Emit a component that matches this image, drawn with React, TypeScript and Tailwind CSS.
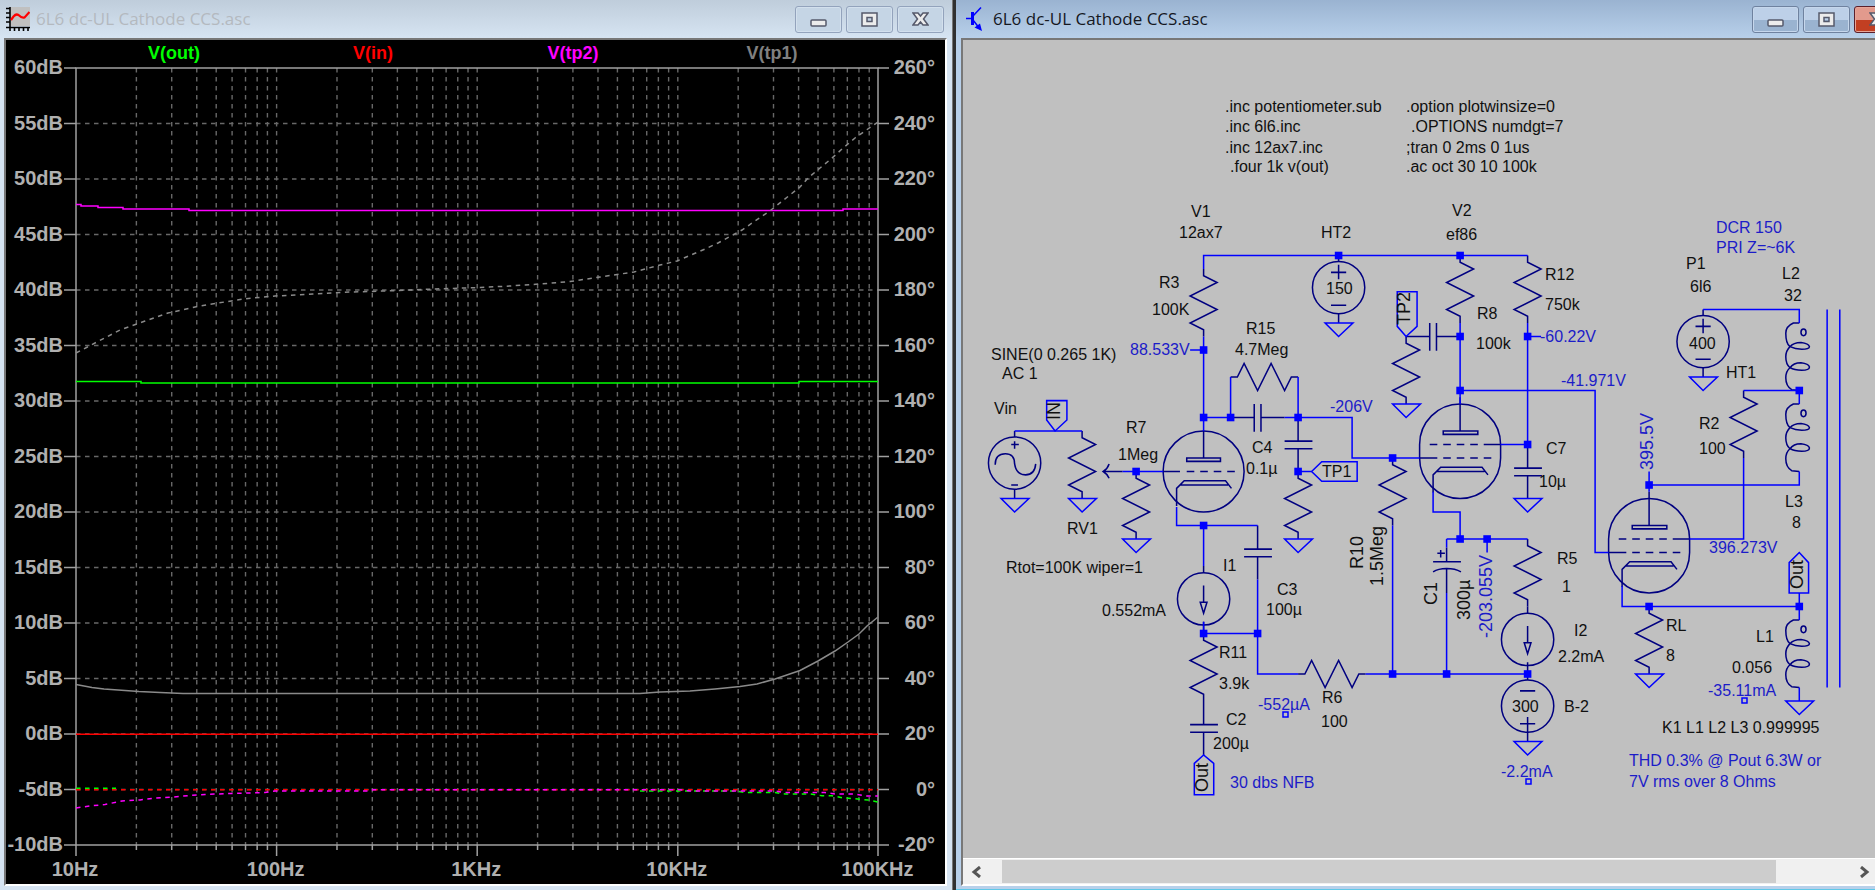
import React from "react";

const DECADE = 200.6;
const PLOT = { left: 76, right: 878, top: 68, bottom: 845 };
const ROW = (PLOT.bottom - PLOT.top) / 14;

const legend = [
  { name: "V(out)", x: 174, color: "#00ff00" },
  { name: "V(in)", x: 373, color: "#ff0000" },
  { name: "V(tp2)", x: 573, color: "#ff00ff" },
  { name: "V(tp1)", x: 772, color: "#808080" },
];

const freqs = ["10Hz", "100Hz", "1KHz", "10KHz", "100KHz"];

function freqLines() {
  const lines: { x: number; major: boolean }[] = [];
  for (let d = 0; d < 4; d++) {
    for (let n = 1; n < 10; n++) {
      lines.push({ x: PLOT.left + DECADE * (d + Math.log10(n)), major: n === 1 });
    }
  }
  return lines;
}

function Plot() {
  const rows = Array.from({ length: 15 }, (_, i) => i);
  const lines = freqLines();

  return (
    <svg viewBox="6 40 939 844" preserveAspectRatio="xMinYMin meet" className="block h-full w-full" fill="none">
      <g stroke="#686868" strokeWidth="1.4" strokeDasharray="4.5 4.5">
        {lines.slice(1).map((l) => (
          <path key={l.x} d={`M${l.x} ${PLOT.top}V${PLOT.bottom}`} />
        ))}
        {rows.slice(1, 14).map((i) => (
          <path key={i} d={`M${PLOT.left} ${PLOT.top + i * ROW}H${PLOT.right}`} />
        ))}
      </g>

      <g stroke="#a0a0a0" strokeWidth="1.5">
        <rect x={PLOT.left} y={PLOT.top} width={PLOT.right - PLOT.left} height={PLOT.bottom - PLOT.top} />
        {rows.map((i) => (
          <path key={i} d={`M64 ${PLOT.top + i * ROW}h12M878 ${PLOT.top + i * ROW}h11`} />
        ))}
        {lines.map((l) => (
          <path key={l.x} d={`M${l.x} ${PLOT.bottom}v${l.major ? 11 : 5}`} />
        ))}
        <path d="M878 845v11" />
      </g>

      {/* magnitude traces */}
      <g strokeWidth="1.5">
        <path stroke="#8a8a8a" d="M76 684.5L92 687.5L104 689L125 690.5L139 691.5L160 692.5L183 693.5H640L660 692L690 691L715 689L740 686.5L757 684L775 679L800 670.5L818 661L835 651L848 642L859 634L867 626L878 617" />
        <path stroke="#ff00ff" d="M76 204.5H81V206H98V207.5H123V209H189V210.5H843V209H878" />
        <path stroke="#00ff00" d="M76 381.5H141V383H799V381.5H878" />
        <path stroke="#ff0000" d="M76 734.3H878" />
      </g>

      {/* phase traces */}
      <g strokeWidth="1.5" strokeDasharray="4.5 4.5">
        <path stroke="#8a8a8a" d="M76 353L95 343L120 330L145 321L168 313L200 306L243 299L275 296L313 294L350 292L385 291L435 289L480 287.5L510 286L540 284L570 281.5L600 277L634 272L660 265L677 261L705 249L718 243L742 230L771 210L800 187L808 178L820 168L831 159L842 149L855 138L865 131L878 122" />
        <path stroke="#00ff00" d="M76 788.3H116M640 791H735L745 792.5H775L785 794H810L822 795.7H832L842 797.7L855 798.7L868 800L878 802" />
        <path stroke="#ff0000" d="M76 789.7H878" />
        <path stroke="#ff00ff" d="M76 808L90 806L105 804.5L122 801L140 800L155 798L173 797L190 795.5L205 794.5L228 793.5L265 792.5L275 791H370L373 789.7H680L690 791H775L785 792.5H825L835 794H855L866 796H878" />
      </g>

      <g className="text-[20px] font-bold" fill="#b0b0b0" fontFamily="Liberation Sans, sans-serif">
        {rows.map((i) => (
          <React.Fragment key={i}>
            <text x="63" y={PLOT.top + i * ROW + 6} textAnchor="end">{60 - i * 5}dB</text>
            <text x="935" y={PLOT.top + i * ROW + 6} textAnchor="end">{260 - i * 20}°</text>
          </React.Fragment>
        ))}
        {freqs.map((f, i) => (
          <text key={f} x={PLOT.left - 1 + i * DECADE} y="876" textAnchor="middle">{f}</text>
        ))}
      </g>
      <g className="text-[18px] font-bold" fontFamily="Liberation Sans, sans-serif">
        {legend.map((l) => (
          <text key={l.name} x={l.x} y="59" fill={l.color} textAnchor="middle">{l.name}</text>
        ))}
      </g>
    </svg>
  );
}

// ---- schematic symbols, drawn on a 16 unit grid ----

interface At {
  x: number;
  y: number;
}

const Resistor = ({ x, y }: At) => (
  <path d={`M${x} ${y}v8l16 8l-32 16l32 16l-32 16l16 8v8`} />
);

const ResistorH = ({ x, y }: At) => (
  <path d={`M${x} ${y}h8l8-16l16 32l16-32l16 32l8-16h8`} />
);

const Cap = ({ x, y }: At) => (
  <path d={`M${x} ${y}v28M${x - 16} ${y + 28}h33M${x - 16} ${y + 37}h33M${x} ${y + 37}v27`} />
);

const CapH = ({ x, y }: At) => (
  <path d={`M${x} ${y}h28M${x + 28} ${y - 16}v33M${x + 36} ${y - 16}v33M${x + 36} ${y}h28`} />
);

const Ground = ({ x, y }: At) => <path d={`M${x - 16} ${y}h33l-17 16z`} />;

const Supply = ({ x, y, flip }: At & { flip?: boolean }) => (
  <>
    <circle cx={x} cy={y + 38} r="31" />
    {flip ? (
      <path d={`M${x} ${y}v7M${x - 9} ${y + 20}h18M${x - 9} ${y + 59}h18M${x} ${y + 51}v29`} />
    ) : (
      <path d={`M${x} ${y}v7M${x} ${y + 11}v17M${x - 9} ${y + 20}h18M${x - 9} ${y + 59}h18M${x} ${y + 69}v11`} />
    )}
  </>
);

const CurrentSource = ({ x, y }: At) => (
  <>
    <circle cx={x} cy={y + 39} r="31" />
    <path d={`M${x} ${y}v8M${x} ${y + 23}v20M${x - 4} ${y + 43}h8l-4 13zM${x} ${y + 66}v14`} />
  </>
);

const Inductor = ({ x, y }: At) => (
  <>
    <path
      transform={`translate(${x} ${y})`}
      d="M0 0H-7Q-16 4 -16 12C-16 20 -15 25 -11 28Q-5 31 3 31Q12 31 12 28Q11 24 2 23Q-7 23 -11 28Q-16 33 -16 40Q-16 49 -11 53Q-6 56 3 56Q12 56 12 52Q11 48 2 47Q-7 47 -11 53Q-16 57 -16 65Q-16 75 -9 79L0 80"
    />
    <ellipse cx={x + 5} cy={y + 11} rx="3" ry="4" />
  </>
);

const Cathode = ({ x, y }: At) => (
  <path d={`M${x - 32} ${y + 30}v-21l9-9h49l7 9M${x - 28} ${y + 5}h57`} />
);

const Triode = ({ x, y }: At) => (
  <>
    <circle cx={x} cy={y + 48} r="48" />
    <path d={`M${x} ${y}v32M${x - 20} ${y + 32}h40v4h-40z`} />
    <path d={`M${x - 48} ${y + 48}h20m8 0h9m7 0h9m7 0h9m7 0h9`} />
    <Cathode x={x} y={y + 59} />
  </>
);

const Pentode = ({ x, y }: At) => (
  <>
    <path d={`M${x - 48} ${y + 48}a48 48 0 0 1 96 0v16a48 48 0 0 1 -96 0z`} />
    <path d={`M${x} ${y - 8}v40M${x - 20} ${y + 32}h41v4h-41z`} />
    <path d={`M${x - 36} ${y + 48}h9m7 0h9m7 0h9m7 0h9m7 0h20`} />
    <path d={`M${x - 48} ${y + 64}h21m7 0h9m7 0h9m7 0h9m7 0h9`} />
    <Cathode x={x} y={y + 75} />
  </>
);

const wires = [
  "M0 16V0H384",
  "M0 96V208M-16 112H0",
  "M0 192H32V144M112 144V192M96 192H176V240H256",
  "M112 256H128M-96 256H-48",
  "M-224 208H-144",
  "M-32 298V320H64M0 320V368M64 384V496H112M0 448H64M0 434V448",
  "M192 496H384M224 320V496M288 400V496",
  "M304 80V176M304 160H464V352H480",
  "M384 80V224H352M384 96H400",
  "M272 280V304H304V336M288 336H384M336 336V352M288 336V346",
  "M592 64H706V80M640 160H706M706 160V176M640 240V336H576",
  "M706 256V272H528M528 256V280",
  "M496 392V416H706M706 400V432M706 512V528",
  "M739 64V512M754 64V512",
];

const nodes = [
  [0, 112], [0, 192], [32, 192], [112, 192], [112, 256], [-80, 256],
  [160, 0], [304, 0], [304, 96], [304, 160], [384, 96], [384, 224],
  [224, 240], [0, 320], [0, 448], [64, 448], [224, 496], [288, 496],
  [384, 496], [304, 336], [336, 336], [528, 272], [706, 160],
  [528, 416], [706, 416],
];

const resistors = [
  [0, 16], [0, 448], [-144, 208], [-80, 256], [112, 256], [224, 240],
  [240, 96], [304, 0], [384, 0], [384, 336], [528, 416], [640, 160],
];

const grounds = [
  [-224, 288], [-144, 288], [-80, 336], [112, 336], [160, 80], [240, 176],
  [384, 288], [384, 576], [528, 496], [592, 144], [706, 528],
];

type Label = [text: string, x: number, y: number];

const labels: Label[] = [
  [".inc potentiometer.sub", 1225, 112],
  [".inc 6l6.inc", 1225, 132],
  [".inc 12ax7.inc", 1225, 153],
  [".four 1k v(out)", 1230, 172],
  [".option plotwinsize=0", 1406, 112],
  [".OPTIONS numdgt=7", 1411, 132],
  [";tran 0 2ms 0 1us", 1406, 153],
  [".ac oct 30 10 100k", 1406, 172],
  ["V1", 1191, 217],
  ["12ax7", 1179, 238],
  ["HT2", 1321, 238],
  ["R3", 1159, 288],
  ["100K", 1152, 315],
  ["R15", 1246, 334],
  ["4.7Meg", 1235, 355],
  ["SINE(0 0.265 1K)", 991, 360],
  ["AC 1", 1002, 379],
  ["Vin", 994, 414],
  ["R7", 1126, 433],
  ["1Meg", 1118, 460],
  ["C4", 1252, 453],
  ["0.1µ", 1246, 474],
  ["TP1", 1322, 477],
  ["150", 1326, 294],
  ["RV1", 1067, 534],
  ["Rtot=100K wiper=1", 1006, 573],
  ["I1", 1223, 571],
  ["0.552mA", 1102, 616],
  ["C3", 1277, 595],
  ["100µ", 1266, 615],
  ["R11", 1219, 658],
  ["3.9k", 1219, 689],
  ["R6", 1322, 703],
  ["100", 1321, 727],
  ["C2", 1226, 725],
  ["200µ", 1213, 749],
  ["V2", 1452, 216],
  ["ef86", 1446, 240],
  ["R12", 1545, 280],
  ["750k", 1545, 310],
  ["R8", 1477, 319],
  ["100k", 1476, 349],
  ["C7", 1546, 454],
  ["10µ", 1539, 487],
  ["R5", 1557, 564],
  ["1", 1562, 592],
  ["I2", 1574, 636],
  ["2.2mA", 1558, 662],
  ["300", 1512, 712],
  ["B-2", 1564, 712],
  ["P1", 1686, 269],
  ["6l6", 1690, 292],
  ["L2", 1782, 279],
  ["32", 1784, 301],
  ["400", 1689, 349],
  ["HT1", 1726, 378],
  ["R2", 1699, 429],
  ["100", 1699, 454],
  ["L3", 1785, 507],
  ["8", 1792, 528],
  ["RL", 1666, 631],
  ["8", 1666, 661],
  ["L1", 1756, 642],
  ["0.056", 1732, 673],
  ["K1 L1 L2 L3 0.999995", 1662, 733],
];

const readings: Label[] = [
  ["88.533V", 1130, 355],
  ["-206V", 1330, 412],
  ["-552µA", 1258, 710],
  ["-60.22V", 1540, 342],
  ["-41.971V", 1561, 386],
  ["-2.2mA", 1501, 777],
  ["396.273V", 1709, 553],
  ["-35.11mA", 1708, 696],
  ["30 dbs NFB", 1230, 788],
  ["DCR 150", 1716, 233],
  ["PRI Z=~6K", 1716, 253],
  ["THD 0.3% @ Pout 6.3W or", 1629, 766],
  ["7V rms over 8 Ohms", 1629, 787],
];

const upright: Label[] = [
  ["IN", 1060, 420],
  ["TP2", 1410, 325],
  ["Out", 1208, 792],
  ["Out", 1803, 589],
  ["R10", 1363, 569],
  ["1.5Meg", 1383, 586],
  ["C1", 1437, 605],
  ["300µ", 1470, 620],
];

const uprightReadings: Label[] = [
  ["-203.055V", 1492, 638],
  ["395.5V", 1653, 470],
];

const Texts = ({ items }: { items: Label[] }) =>
  items.map(([t, x, y]) => (
    <text key={`${t}${x}${y}`} x={x} y={y}>{t}</text>
  ));

const UprightTexts = ({ items }: { items: Label[] }) =>
  items.map(([t, x, y]) => (
    <text key={`${t}${x}`} transform={`translate(${x} ${y}) rotate(-90)`}>{t}</text>
  ));

function Schematic() {
  return (
    <svg viewBox="963 40 912 818" preserveAspectRatio="xMinYMin meet" className="block h-full w-full" fill="none">
      <g transform="translate(1203.6 255.5) scale(.84375)" strokeWidth="1.8">
        <g stroke="#000080">
          {resistors.map(([x, y]) => <Resistor key={`${x},${y}`} x={x} y={y} />)}
          <ResistorH x={32} y={144} />
          <ResistorH x={112} y={496} />
          <Cap x={112} y={192} />
          <Cap x={64} y={320} />
          <Cap x={0} y={528} />
          <Cap x={384} y={224} />
          <CapH x={32} y={192} />
          <CapH x={240} y={96} />
          <Supply x={160} y={0} />
          <Supply x={592} y={64} />
          <Supply x={384} y={496} flip />
          <CurrentSource x={0} y={368} />
          <CurrentSource x={384} y={416} />
          <Inductor x={706} y={80} />
          <Inductor x={706} y={176} />
          <Inductor x={706} y={432} />
          <Triode x={0} y={208} />
          <Pentode x={304} y={176} />
          <Pentode x={528} y={288} />
          {/* input source */}
          <circle cx="-224" cy="246" r="31" />
          <path d="M-224 208v7M-228 224h9M-224 220v9M-228 272h8M-224 277v11" />
          <path d="M-247 248Q-247 235 -235 235Q-224 235 -224 247Q-222 260 -211 260Q-200 260 -199 247" />
          {/* wiper */}
          <path d="M-96 256H-119M-112 247Q-114 253 -119 256Q-114 259 -112 264" />
          {/* polarised cap C1 */}
          <path d="M288 346V363M272 363H305M272 375Q278 371 288 371Q298 371 305 375M288 371V400M277 353H286M281 349V358" />
        </g>
        <g stroke="#0000ff">
          {wires.map((d) => <path key={d} d={d} />)}
          {grounds.map(([x, y]) => <Ground key={`${x},${y}`} x={x} y={y} />)}
          <path d="M128 256L140 244.500H182V267.500H140Z" />
          <path d="M240 96L229.500 84V43H253V84Z" />
          <path d="M-176 208L-186 195V172H-162V195Z" />
          <path d="M0 592L-11 602V639H12V602Z" />
          <path d="M706 352L694 364V400H717V364Z" />
        </g>
        <g fill="#0000ff">
          {nodes.map(([x, y]) => (
            <rect key={`${x},${y}`} x={x - 4.5} y={y - 4.5} width="9" height="9" />
          ))}
        </g>
      </g>

      <g stroke="#0000ff" strokeWidth="1.5">
        <rect x="1283" y="712" width="5" height="5" />
        <rect x="1526" y="779" width="5" height="5" />
        <rect x="1742" y="698" width="5" height="5" />
      </g>

      <g className="text-[16px]" fontFamily="Liberation Sans, sans-serif">
        <g fill="#101010"><Texts items={labels} /></g>
        <g fill="#1c1cc8"><Texts items={readings} /></g>
      </g>
      <g className="text-[18px]" fontFamily="Liberation Sans, sans-serif">
        <g fill="#101010"><UprightTexts items={upright} /></g>
        <g fill="#1c1cc8"><UprightTexts items={uprightReadings} /></g>
      </g>
    </svg>
  );
}

function PlotIcon() {
  return (
    <svg viewBox="0 0 24 24" className="h-6 w-6" fill="none">
      <path d="M5 0H24V19H5z" fill="#c0c0c0" />
      <path d="M4 0V24M0 20.500H24M0 1.500H4M0 6H4M0 10.500H4M0 15H4M8.500 20V24M13 20V24M17.500 20V24M22 20V24" stroke="#000" strokeWidth="1.600" />
      <path d="M5 13L7.500 9.500Q10 6.500 12.500 8Q16 11.500 18.500 10.500Q20 9 23.500 5" stroke="#f00" strokeWidth="2.200" />
    </svg>
  );
}

function TransistorIcon() {
  return (
    <svg viewBox="0 0 24 24" className="h-6 w-6" fill="none" stroke="#0000ff">
      <path d="M7.500 5V18" strokeWidth="3" />
      <path d="M1 11.500H7M8 9L16 0.500M8 13L15 22" strokeWidth="1.500" />
      <path d="M17 24L9.500 20.500L15 16.500Z" fill="#0000ff" stroke="none" />
    </svg>
  );
}

const glyphs = {
  minimize: <rect x="1" y="8" width="15" height="6" rx="1" />,
  maximize: <path fillRule="evenodd" d="M1 1H16V14H1zM6 5.500H11V9.500H6z" />,
  close: <path d="M1 1H6L8.500 4L11 1H16L11.500 7L16 13H11L8.500 10L6 13H1L5.500 7Z" />,
};

interface CaptionButtonProps {
  kind: keyof typeof glyphs;
  look: string;
}

function CaptionButton({ kind, look }: CaptionButtonProps) {
  return (
    <button aria-label={kind} className={`flex h-[27px] w-[47px] shrink-0 items-center justify-center rounded-[3px] border ${look}`}>
      <svg viewBox="0 0 17 15" className="h-[15px] w-[17px]" fill="#ececec" stroke="#55596b" strokeWidth="1.500">
        {glyphs[kind]}
      </svg>
    </button>
  );
}

const idle = "border-[#93a3bc] bg-[#c5d5e5] shadow-[inset_0_0_0_1px_#d3e0ed]";
const active = "border-[#6f829f] bg-linear-to-b from-[#bdd0e8] from-50% to-[#9ab3d0] to-50% shadow-[inset_0_0_0_1px_#c6d7ec]";
const danger = "border-[#5b1f2a] bg-linear-to-b from-[#e29a8d] from-50% to-[#c23f22] to-50% shadow-[inset_0_0_0_1px_#e7a598]";

export default function App() {
  return (
    <main className="grid h-screen min-h-0 w-full grid-cols-[952fr_4px_919fr] overflow-hidden bg-[#303030] font-['Open_Sans',sans-serif]">
      <section className="flex min-h-0 min-w-0 flex-col bg-[#d6e4f2] pr-[5px] pb-1 pl-1">
        <header className="-mr-[5px] -ml-1 flex h-[38px] shrink-0 items-center gap-1.5 bg-linear-to-b from-[#bfcddb] to-[#d6e4f2] pr-2 pl-1.5">
          <PlotIcon />
          <h1 className="flex-1 truncate text-[17px] leading-6 text-[#b4b9bf]">6L6 dc-UL Cathode CCS.asc</h1>
          <div className="flex gap-1">
            <CaptionButton kind="minimize" look={idle} />
            <CaptionButton kind="maximize" look={idle} />
            <CaptionButton kind="close" look={idle} />
          </div>
        </header>
        <div className="min-h-0 flex-1 border-2 border-t-[#787878] border-r-white border-b-white border-l-[#787878] bg-black">
          <Plot />
        </div>
      </section>

      <div className="border-l border-[#777]" />

      <section className="flex min-h-0 min-w-0 flex-col overflow-hidden border-b border-[#5fc8e8] bg-[#b8d0ea] pb-[3px] pl-[5px]">
        <header className="-ml-[5px] flex h-[38px] shrink-0 items-center gap-1 bg-linear-to-b from-[#9ab3d1] to-[#b8d0ea] pl-[9px]">
          <TransistorIcon />
          <h1 className="flex-1 truncate text-[17px] leading-6 text-[#15181f]">6L6 dc-UL Cathode CCS.asc</h1>
          <div className="-mr-[26px] flex gap-1">
            <CaptionButton kind="minimize" look={active} />
            <CaptionButton kind="maximize" look={active} />
            <CaptionButton kind="close" look={danger} />
          </div>
        </header>
        <div className="flex min-h-0 flex-1 flex-col border-t-2 border-b-2 border-l-2 border-t-[#787878] border-b-white border-l-[#787878] bg-[#c0c0c0]">
          <div className="min-h-0 flex-1">
            <Schematic />
          </div>
          <div className="flex h-[26px] shrink-0 items-stretch border-t border-white bg-[#f0f0f0]">
            <button aria-label="Scroll left" className="flex w-[39px] items-center pl-2">
              <svg viewBox="0 0 10 12" className="h-3 w-2.5" fill="none" stroke="#555" strokeWidth="3">
                <path d="M9 1L3 6L9 11" />
              </svg>
            </button>
            <div className="flex-1 py-px">
              <div className="h-full w-[91%] bg-[#cdcdcd]" />
            </div>
            <button aria-label="Scroll right" className="flex w-[23px] items-center pl-2">
              <svg viewBox="0 0 10 12" className="h-3 w-2.5" fill="none" stroke="#555" strokeWidth="3">
                <path d="M1 1L7 6L1 11" />
              </svg>
            </button>
          </div>
        </div>
      </section>
    </main>
  );
}
